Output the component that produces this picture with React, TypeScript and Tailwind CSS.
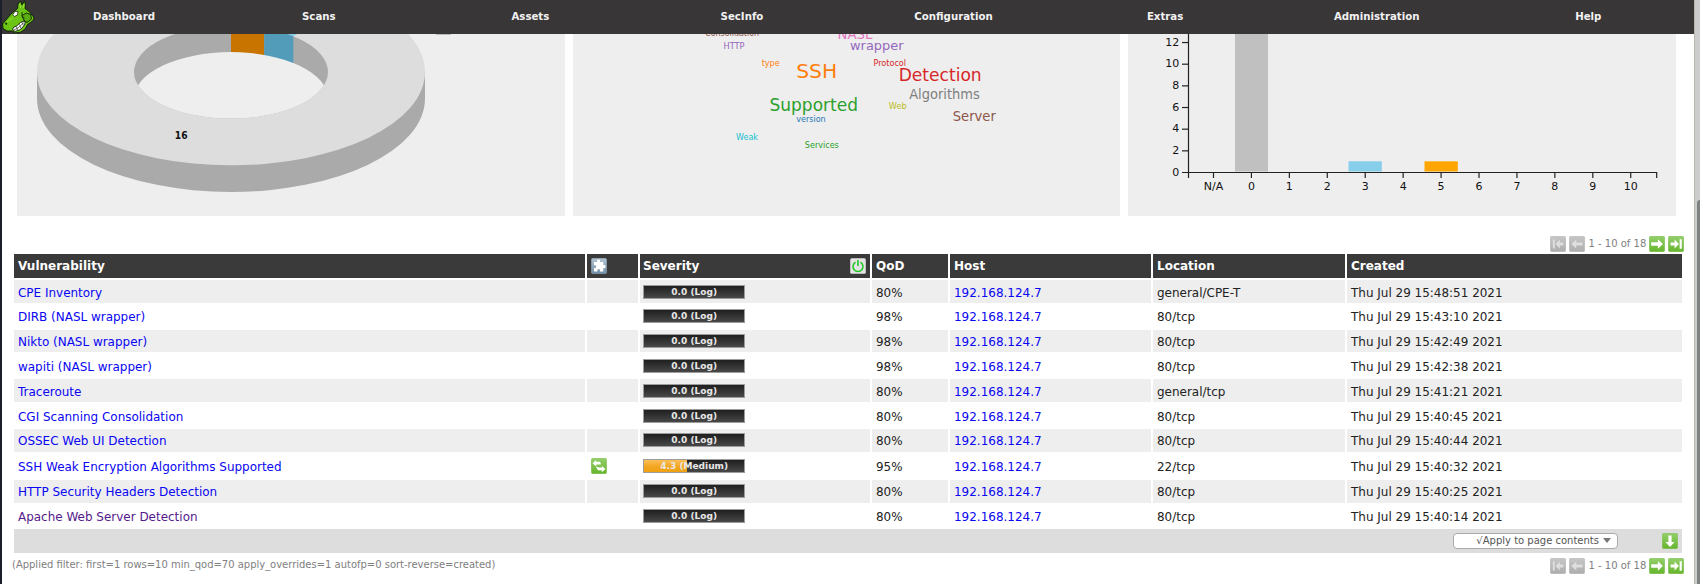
import React from "react";

const MENU = ["Scans", "Assets", "SecInfo", "Configuration", "Extras", "Administration", "Help"];

type Vuln = { name: string; qod: string; loc: string; date: string; score?: number; visited?: boolean };

const ROWS: Vuln[] = [
  { name: "CPE Inventory", qod: "80%", loc: "general/CPE-T", date: "Thu Jul 29 15:48:51 2021" },
  { name: "DIRB (NASL wrapper)", qod: "98%", loc: "80/tcp", date: "Thu Jul 29 15:43:10 2021" },
  { name: "Nikto (NASL wrapper)", qod: "98%", loc: "80/tcp", date: "Thu Jul 29 15:42:49 2021" },
  { name: "wapiti (NASL wrapper)", qod: "98%", loc: "80/tcp", date: "Thu Jul 29 15:42:38 2021" },
  { name: "Traceroute", qod: "80%", loc: "general/tcp", date: "Thu Jul 29 15:41:21 2021" },
  { name: "CGI Scanning Consolidation", qod: "80%", loc: "80/tcp", date: "Thu Jul 29 15:40:45 2021" },
  { name: "OSSEC Web UI Detection", qod: "80%", loc: "80/tcp", date: "Thu Jul 29 15:40:44 2021" },
  { name: "SSH Weak Encryption Algorithms Supported", qod: "95%", loc: "22/tcp", date: "Thu Jul 29 15:40:32 2021", score: 4.3 },
  { name: "HTTP Security Headers Detection", qod: "80%", loc: "80/tcp", date: "Thu Jul 29 15:40:25 2021" },
  { name: "Apache Web Server Detection", qod: "80%", loc: "80/tcp", date: "Thu Jul 29 15:40:14 2021", visited: true },
];

const COLS = "grid grid-cols-[571px_51px_230px_76px_201px_192px_335px] gap-x-[2px]";

function Logo() {
  return (
    <svg width="33" height="34" viewBox="0 0 33 34" className="block">
      <g stroke="#0b1a04" strokeWidth=".9" strokeLinejoin="round">
        <path d="M15.500 8.500L16 4L18.500 1L20 5L22.500 .8L23.500 5L23 8.500L26.500 11L28.500 13L29.500 15L32 17L31.500 20L28.500 22.500L25.500 24.500L23.500 28.500L19 32L13 33L10.500 31L5 31L1 28.500L.6 24L3.500 20.500L9 14Z" fill="#6cc414" />
        <path d="M20 15.500L24.500 13L28.500 14.500L29.500 19L25 22.500L22.500 21L20.500 17Z" fill="#5cae10" />
        <path d="M10.500 29.500Q11 26.500 14.500 26L18.500 22.500L22 21Q24 22 22.500 25L18.500 29.500L13 31.500Z" fill="#fff" />
        <path d="M11.500 30L16 28L22.500 22M14.500 26.500L15.500 30.500M17.500 24.500L19 28.500M20 22.500L21.500 25.500" fill="none" strokeWidth=".6" />
        <path d="M10.800 14.500L13 11.500L16 11.300L15.500 15L12.500 16.500Z" fill="#fff" strokeWidth=".7" />
      </g>
      <circle cx="4.200" cy="23.700" r="1" fill="#0b1a04" />
      <path d="M17.800 4L18.500 8M21.800 4L21.500 8M5 22L11 17.500" stroke="#9be23e" strokeWidth="1" />
      <path d="M20 12V16.500L22.500 18" fill="none" stroke="#1d3d05" strokeWidth="1" />
    </svg>
  );
}

type IconKind = "first" | "prev" | "next" | "last" | "down" | "override";

function Icon({ kind }: { kind: IconKind }) {
  const gray = kind === "first" || kind === "prev";
  const id = "ic-" + kind;
  const glyph: Record<IconKind, React.ReactNode> = {
    first: <path d="M2.8 3.5h2v9h-2z M5.6 8l4.2-4.4v2.9h3.6v3H9.8v2.9z" />,
    prev: <path d="M2.3 8l5-4.6v3h6.2v3.2H7.3v3z" />,
    next: <path d="M13.9 8L8.9 3.3v3H2.2v3.4h6.7v3z" />,
    last: <path d="M11.6 3.2h2.2v9.6h-2.2z M10.9 8L6.6 3.4v3H2.6v3.2h4v3z" />,
    down: <path d="M8 14L3.400 9h3V2.400h3.200V9h3z" />,
    override: <path d="M1.500 5.200L5.200 2v1.800h3.300L9.800 5v1.600H5.200v1.800z M14.500 11L10.800 7.900v1.700H8.200L5 8.600l1.800 3.700h4v1.900z" />,
  };
  return (
    <svg width="16" height="16" viewBox="0 0 16 16" className="block shrink-0">
      <defs>
        <linearGradient id={id} x1="0" y1="0" x2="0" y2="1">
          <stop offset="0" stopColor={gray ? "#c6c6c6" : "#94cf6c"} />
          <stop offset="1" stopColor={gray ? "#adadad" : "#65b52b"} />
        </linearGradient>
      </defs>
      <rect x=".3" y=".3" width="15.4" height="15.4" rx="1.6" fill={`url(#${id})`} stroke={gray ? "#b5b5b5" : "#7cbc50"} strokeWidth=".6" />
      <g fill={gray ? "#dedede" : "#fff"}>{glyph[kind]}</g>
    </svg>
  );
}

function PuzzleIcon() {
  return (
    <svg width="16" height="16" viewBox="0 0 16 16" className="block">
      <defs>
        <linearGradient id="pz" x1="0" y1="0" x2="0" y2="1">
          <stop offset="0" stopColor="#b4c5d3" />
          <stop offset="1" stopColor="#6f8da6" />
        </linearGradient>
      </defs>
      <rect x=".3" y=".3" width="15.4" height="15.4" rx="1.8" fill="url(#pz)" stroke="#8fa5b6" strokeWidth=".6" />
      <path d="M3 4h3.2c.3-.8-.5-1 0-1.9.5-.7 2.3-.7 2.8 0 .5.9-.3 1.100 0 1.900h3.300v3.200c.8.3 1-.5 1.700 0 .7.6.7 2.300 0 2.800-.7.500-.9-.3-1.700 0V13.500H9c-.4-.8.4-1.200-.2-1.900-.5-.5-1.800-.5-2.300 0-.6.700.2 1.100-.2 1.900H3V10c.8-.3 1 .5 1.700 0 .6-.5.6-2.200 0-2.700-.7-.5-.9.3-1.700 0z" fill="#fff" />
    </svg>
  );
}

function PowerIcon() {
  return (
    <svg width="16" height="16" viewBox="0 0 16 16" className="block">
      <rect x=".2" y=".2" width="15.6" height="15.6" rx="1.500" fill="#e3e3e3" />
      <path d="M5.500 4.200a5 5 0 1 0 5 0M8 2v6" fill="none" stroke="#18c81c" strokeWidth="1.500" />
    </svg>
  );
}

function Pager() {
  return (
    <div className="flex h-4 items-center justify-end gap-[3px] text-[10px] leading-4 text-[#808080]">
      <Icon kind="first" />
      <Icon kind="prev" />
      <span className="w-[58px] whitespace-nowrap pl-[.5px]">1 - 10 of 18</span>
      <Icon kind="next" />
      <Icon kind="last" />
    </div>
  );
}

function Severity({ score = 0 }: { score?: number }) {
  return (
    <div className="grid h-[14px] w-[102px] border border-[#9c9c9c] bg-linear-to-b from-[#1f1f1f] to-[#484848]">
      <div className="col-start-1 row-start-1 h-full bg-linear-to-b from-[#fbc057] via-[#f3a722] to-[#f0a010]" style={{ width: `${score * 10}%` }} />
      <div className="z-10 col-start-1 row-start-1 text-center text-[9px] leading-[12px] font-bold text-[#e8e8e8]">
        {score.toFixed(1)} ({score > 0 ? "Medium" : "Log"})
      </div>
    </div>
  );
}

function Donut() {
  return (
    <svg width="548" height="182" viewBox="17 34 548 182" className="block">
      <defs>
        <clipPath id="hole"><ellipse cx="231" cy="72" rx="97" ry="46.600" /></clipPath>
      </defs>
      <path d="M37 72V98.700A194 93.300 0 0 0 425 98.700V72Z" fill="#aaaaaa" />
      <ellipse cx="231" cy="72" rx="194" ry="93.300" fill="#dddddd" />
      <path d="M264.200 28.200L293.300 36.300L355.700 .5L297 -15Z" fill="#87ceeb" />
      <g clipPath="url(#hole)">
        <rect x="130" y="20" width="202" height="100" fill="#aaaaaa" />
        <rect x="231" y="20" width="33.200" height="60" fill="#c87400" />
        <rect x="264.200" y="20" width="29.100" height="60" fill="#529cb9" />
        <ellipse cx="231" cy="98.700" rx="97" ry="46.600" fill="#eeeeee" />
      </g>
      <rect x="436" y="33" width="15" height="1.800" fill="#aaaaaa" />
      <text x="174.800" y="139" fontSize="10" fontWeight="700" textLength="12.800" lengthAdjust="spacingAndGlyphs" fill="#111">16</text>
    </svg>
  );
}

const WORDS: [string, number, number, number, number, string][] = [
  ["Consolidation", 704.6, 36, 8.300, 54, "#8c564b"],
  ["HTTP", 723, 49, 8.800, 21, "#9467bd"],
  ["NASL", 837, 39.3, 13.300, 35, "#e377c2"],
  ["wrapper", 849.5, 50, 13, 53.500, "#9467bd"],
  ["type", 761.2, 66, 8.300, 18, "#ff7f0e"],
  ["SSH", 795.700, 78, 19.300, 41, "#ff7f0e"],
  ["Protocol", 873, 66, 8.500, 32.500, "#d62728"],
  ["Detection", 898.2, 81, 17.500, 83, "#d62728"],
  ["Algorithms", 908.700, 99, 13.300, 70.500, "#7f7f7f"],
  ["Supported", 769, 111, 17.500, 88.500, "#2ca02c"],
  ["Web", 888.3, 109, 8.500, 18, "#bcbd22"],
  ["version", 795.700, 122, 8.300, 29.500, "#1f77b4"],
  ["Server", 952.3, 121, 13.300, 43, "#8c564b"],
  ["Weak", 735.5, 139.600, 8.500, 22, "#17becf"],
  ["Services", 804.300, 147.700, 8.500, 34, "#2ca02c"],
];

function Cloud() {
  return (
    <svg width="548" height="182" viewBox="572.500 34 548 182" className="block">
      {WORDS.map(([t, x, y, s, w, c]) => (
        <text key={t} x={x} y={y} fontSize={s} fill={c} textLength={w} lengthAdjust="spacingAndGlyphs">{t}</text>
      ))}
    </svg>
  );
}

function Bars() {
  const labels = ["N/A", "0", "1", "2", "3", "4", "5", "6", "7", "8", "9", "10"];
  return (
    <svg width="548" height="182" viewBox="1128 34 548 182" className="block">
      <rect x="1235" y="30" width="33" height="141.500" fill="#c0c0c0" />
      <rect x="1348.500" y="161.300" width="33.300" height="10.200" fill="#87ceeb" />
      <rect x="1424.500" y="161.300" width="33.300" height="10.200" fill="#ffa500" />
      <g stroke="#222" strokeWidth="1.200" fill="none">
        <path d="M1188.500 30V178M1182 172.500H1656.700V178" />
        {[2, 4, 6, 8, 10, 12].map((v) => (
          <path key={v} d={`M1182 ${172.500 - v * 10.830}H1188.500`} />
        ))}
        {labels.map((l, i) => (
          <path key={l} d={`M${1213.500 + i * 37.930} 172.500V178`} />
        ))}
      </g>
      <g fontSize="11" fill="#111">
        {[0, 2, 4, 6, 8, 10, 12].map((v) => (
          <text key={v} x="1179.300" y={175.700 - v * 10.830} textAnchor="end">{v}</text>
        ))}
        {labels.map((l, i) => (
          <text key={l} x={1213.500 + i * 37.930} y="189.500" textAnchor="middle">{l}</text>
        ))}
      </g>
    </svg>
  );
}

export default function App() {
  return (
    <div className="flex h-[584px] w-[1700px] overflow-hidden bg-white font-['DejaVu_Sans',sans-serif] text-[12px] text-[#222]">
      <div className="w-[2px] shrink-0 bg-[#1c1e2b]" />
      <main className="flex w-[1692px] shrink-0 flex-col">
        <nav className="flex h-[34px] shrink-0 items-center bg-[#393637] text-[10.200px] font-bold text-[#f2f2f2]">
          <Logo />
          <div className="w-[178px] text-center">Dashboard</div>
          {MENU.map((m) => (
            <div key={m} className="flex-1 text-center">{m}</div>
          ))}
        </nav>
        <section className="flex h-[182px] shrink-0 gap-[8px] pl-[15px]">
          <div className="w-[547.500px] overflow-hidden bg-[#eeeeee]"><Donut /></div>
          <div className="w-[547.500px] overflow-hidden bg-[#eeeeee]"><Cloud /></div>
          <div className="w-[548px] overflow-hidden bg-[#eeeeee]"><Bars /></div>
        </section>
        <div className="mt-5 pr-[10px]"><Pager /></div>
        <section className="mt-[2px] ml-[12px] flex w-[1668px] flex-col gap-[2px]">
          <div className={`${COLS} h-6 text-white font-bold leading-6 [&>div]:bg-[#3a3a3a] [&>div]:pl-1`}>
            <div>Vulnerability</div>
            <div className="flex items-center"><PuzzleIcon /></div>
            <div className="flex items-center justify-between pr-1"><span className="-ml-px">Severity</span><PowerIcon /></div>
            <div>QoD</div>
            <div>Host</div>
            <div>Location</div>
            <div>Created</div>
          </div>
          {ROWS.map((r, i) => (
            <div
              key={r.name}
              className={`${COLS} ${r.score ? "h-[24.200px]" : "h-[22.800px]"} ${i % 2 ? "" : "[&>div]:bg-[#eeeeee]"} text-[11.970px] leading-[18px] [&>div]:flex [&>div]:items-center [&>div]:pt-[2.600px] [&>div]:pl-1`}
            >
              <div className={r.visited ? "text-[#551a8b]" : "text-[#0a05f2]"}>{r.name}</div>
              <div>{r.score ? <span className="-mt-[1.600px]"><Icon kind="override" /></span> : null}</div>
              <div><div className="-mt-[2.200px] -ml-[.8px]"><Severity score={r.score} /></div></div>
              <div>{r.qod}</div>
              <div className="text-[#0a05f2]">192.168.124.7</div>
              <div>{r.loc}</div>
              <div>{r.date}</div>
            </div>
          ))}
          <div className="flex h-6 items-center justify-end bg-[#dddddd] pr-1">
            <div className="mr-[44px] flex h-4 w-[165.500px] items-center justify-end gap-1 rounded-[4px] border border-[#aaa] bg-white pr-[6px] pb-px text-[10px] leading-none text-[#555]">
              <span>√Apply to page contents</span>
              <svg width="8" height="5" viewBox="0 0 8 5"><path d="M0 0H8L4 5Z" fill="#777" /></svg>
            </div>
            <Icon kind="down" />
          </div>
        </section>
        <div className="mt-[5px] flex justify-between pr-[10px] pl-[10px]">
          <span className="text-[9.980px] leading-[14px] text-[#808080]">
            (Applied filter: first=1 rows=10 min_qod=70 apply_overrides=1 autofp=0 sort-reverse=created)
          </span>
          <Pager />
        </div>
      </main>
      <div className="w-[6px] shrink-0 border-l border-[#bbb5b0] bg-[#cccccc] pt-[200px] pl-[2px]">
        <div className="h-[390px] rounded-tl-[3px] bg-[#7d8282]" />
      </div>
    </div>
  );
}
